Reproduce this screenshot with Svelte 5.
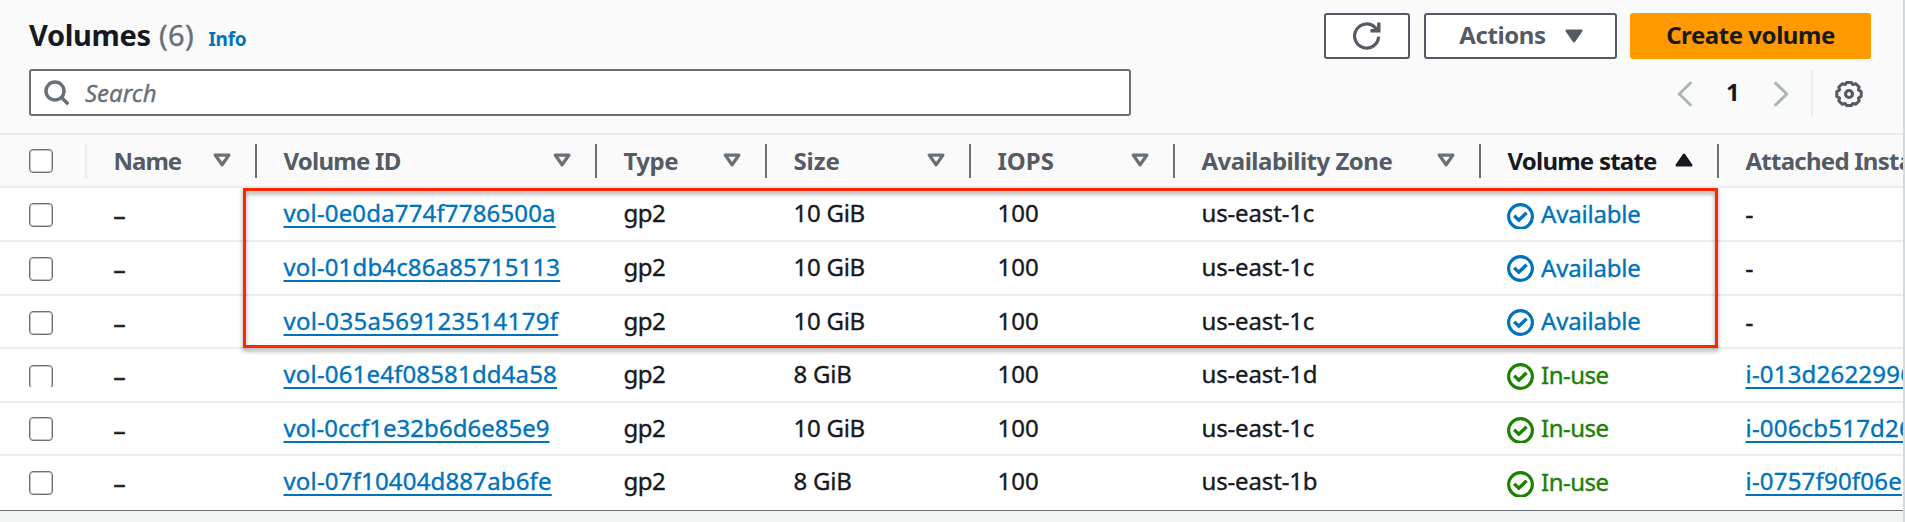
<script>
  const columns = [
    { label: 'Name', track: -1 },
    { label: 'Volume ID', track: -0.75 },
    { label: 'Type', track: -0.5 },
    { label: 'Size', track: -0.1 },
    { label: 'IOPS', track: 0 },
    { label: 'Availability Zone', track: -0.5 },
    { label: 'Volume state', track: -0.78, sorted: true },
    { label: 'Attached Insta', track: -0.75 }
  ];

  const volumes = [
    { id: 'vol-0e0da774f7786500a', track: 0.16, size: '10 GiB', zone: 'us-east-1c', state: 'Available', instance: '-', h: 54, box: 15, icon: 15, iconH: 26, drop: 1 },
    { id: 'vol-01db4c86a85715113', track: 0.15, size: '10 GiB', zone: 'us-east-1c', state: 'Available', instance: '-', h: 54, box: 15, icon: 13, iconH: 27, drop: 1 },
    { id: 'vol-035a569123514179f', track: 0.31, size: '10 GiB', zone: 'us-east-1c', state: 'Available', instance: '-', h: 53, box: 15, icon: 13, iconH: 27, drop: 0 },
    { id: 'vol-061e4f08581dd4a58', track: 0.16, size: '8 GiB', zone: 'us-east-1d', state: 'In-use', instance: 'i-013d2622996', h: 54, box: 16, icon: 14, iconH: 27, drop: 1, cut: true },
    { id: 'vol-0ccf1e32b6d6e85e9', track: 0.02, size: '10 GiB', zone: 'us-east-1c', state: 'In-use', instance: 'i-006cb517d26', h: 53, box: 14, icon: 14, iconH: 26, drop: 0 },
    { id: 'vol-07f10404d887ab6fe', track: 0.17, size: '8 GiB', zone: 'us-east-1b', state: 'In-use', instance: 'i-0757f90f06e', h: 54, box: 15, icon: 15, iconH: 26, drop: 1 }
  ];
</script>

<div class="page">
  <section class="panel">
    <div class="toolbar">
      <div class="heading">
        <h1>Volumes</h1>
        <span class="count">(6)</span>
        <a class="info" href="#info">Info</a>
      </div>
      <div class="actions">
        <button class="btn refresh" aria-label="Refresh">
          <svg width="28" height="28" viewBox="0 0 28 28" fill="none" stroke="#545b64" stroke-width="3.2">
            <path d="M25.6 14.6A12 12 0 1 1 22.2 5.6L24 8" />
            <path d="M25.8 0.4V8.7H17.4" stroke-width="3.4" />
          </svg>
        </button>
        <button class="btn menu">
          <span>Actions</span>
          <svg width="18" height="14" viewBox="0 0 18 14"><path d="M1.7 1.7H16.3L9 12.3Z" fill="#545b64" stroke="#545b64" stroke-width="2.4" stroke-linejoin="round" /></svg>
        </button>
        <button class="btn primary">Create volume</button>
      </div>
    </div>

    <div class="filters">
      <div class="search">
        <svg width="26" height="26" viewBox="0 0 26 26" fill="none" stroke="#687078" stroke-width="3.5">
          <circle cx="11" cy="11" r="9" /><path d="M17.3 17.3L24.2 24.2" />
        </svg>
        <span>Search</span>
      </div>
      <div class="pager">
        <svg width="16" height="26" viewBox="0 0 16 26" fill="none" stroke="#aab7b8" stroke-width="3"><path d="M14.3 1.2L2.3 13L14.3 24.8" /></svg>
        <b>1</b>
        <svg width="16" height="26" viewBox="0 0 16 26" fill="none" stroke="#aab7b8" stroke-width="3"><path d="M1.7 1.2L13.7 13L1.7 24.8" /></svg>
        <div class="gear">
          <svg width="28" height="28" viewBox="-14 -14 28 28" fill="none" stroke="#545b64" stroke-width="3" stroke-linejoin="round">
            <path d="M-2.4 -11.6H2.4L3.8 -9.4L6.8 -10.2L10.2 -7L9.4 -4L12.2 -2.4V2.4L9.4 4L10.2 7L6.8 10.2L3.8 9.4L2.4 11.6H-2.4L-3.8 9.4L-6.8 10.2L-10.2 7L-9.4 4L-12.2 2.4V-2.4L-9.4 -4L-10.2 -7L-6.8 -10.2L-3.8 -9.4Z" />
            <circle r="3.5" stroke-width="3.2" />
          </svg>
        </div>
      </div>
    </div>

    <div class="grid head">
      <div class="cell select"><span class="box"></span></div>
      {#each columns as col, i}
        <div class="cell" class:sorted={col.sorted} class:last={i === columns.length - 1}>
          <span class="label" style="letter-spacing: {col.track}px">{col.label}</span>
          {#if col.sorted}
            <svg width="18" height="14" viewBox="0 0 18 14"><path d="M1.7 12.3H16.3L9 1.7Z" fill="#16191f" stroke="#16191f" stroke-width="2.4" stroke-linejoin="round" /></svg>
          {:else if i < columns.length - 1}
            <svg width="18" height="14" viewBox="0 0 18 14"><path d="M2.3 2.1H15.9L9.1 11.8Z" fill="none" stroke="#687078" stroke-width="3.3" stroke-linejoin="round" /></svg>
          {/if}
        </div>
      {/each}
    </div>

    <div class="rows">
      {#each volumes as v}
        <div class="grid row" style="height: {v.h}px">
          <div class="cell select"><span class="box" class:cut={v.cut} style="margin-top: {v.box}px"></span></div>
          <div class="cell dash">–</div>
          <div class="cell"><a href="#{v.id}" style="letter-spacing: {v.track}px">{v.id}</a></div>
          <div class="cell type">gp2</div>
          <div class="cell size">{v.size}</div>
          <div class="cell iops">100</div>
          <div class="cell zone">{v.zone}</div>
          <div class="cell state" class:used={v.state === 'In-use'}>
            <svg style="margin-top: {v.icon}px" width="27" height={v.iconH} viewBox="0 0 27 {v.iconH}" fill="none" stroke="currentColor" stroke-width="3.1">
              <circle cx="13.5" cy="13.5" r="11.9" /><path d="M7.2 12.8L11.8 17.2L19.6 9.8" stroke-width="3.4" />
            </svg>
            <span style="margin-top: {10 + v.drop}px">{v.state}</span>
          </div>
          <div class="cell instance" class:none={v.instance === '-'}>
            {#if v.instance === '-'}<span>-</span>{:else}<a href="#{v.instance}">{v.instance}</a>{/if}
          </div>
        </div>
      {/each}
      <div class="highlight"></div>
    </div>
  </section>
  <div class="edge"></div>
</div>

<style>
  :global(body) { margin: 0; background: #f2f3f3; }
  .page {
    display: flex;
    width: 1905px;
    height: 522px;
    overflow: hidden;
    box-sizing: border-box;
    font: 24px/30px "Noto Sans", "Open Sans", sans-serif;
    color: #16191f;
    background: #f2f3f3;
  }
  .page * { box-sizing: border-box; }
  .panel { width: 1903px; height: 511px; overflow: hidden; background: #fafafa; border-bottom: 1px solid #687078; }
  .edge { width: 2px; height: 522px; background: #d5dbdb; }
  a { color: #0073bb; text-decoration: none; }

  .toolbar { display: flex; justify-content: space-between; height: 69px; padding: 13px 32px 0 29px; }
  .heading { display: flex; align-items: baseline; padding-top: 4px; }
  h1 { margin: 0; font-size: 29px; line-height: 36px; letter-spacing: -0.35px; }
  .count { margin-left: 8.5px; font-size: 29px; color: #687078; letter-spacing: 0.3px; -webkit-text-stroke: 0.35px; }
  .info { margin-left: 14.5px; font-size: 19px; font-weight: 700; letter-spacing: -0.3px; }
  .actions { display: flex; }
  .btn {
    display: flex;
    align-items: center;
    justify-content: center;
    height: 46px;
    padding: 0;
    border: 2px solid #545b64;
    border-radius: 3px;
    background: #fff;
    color: #545b64;
    font: 700 24px/30px "Noto Sans", "Open Sans", sans-serif;
  }
  .refresh { width: 86px; margin-right: 14px; }
  .menu { width: 193px; margin-right: 13px; gap: 19px; padding-left: 1px; letter-spacing: -0.4px; }
  .menu span { margin-top: -2px; }
  .primary { width: 241px; border: 0; background: #ff9900; color: #16191f; letter-spacing: -0.45px; padding-bottom: 2px; }

  .filters { display: flex; justify-content: space-between; height: 64px; padding: 0 32px 0 29px; }
  .search {
    display: flex;
    align-items: center;
    width: 1102px;
    height: 47px;
    padding: 0 13px;
    gap: 15px;
    border: 2px solid #687078;
    border-radius: 3px;
    background: #fff;
    color: #687078;
    font-style: italic;
    -webkit-text-stroke: 0.35px;
  }
  .pager { display: flex; align-items: center; height: 47px; }
  .pager svg { margin-top: 2px; }
  .pager b { width: 14px; margin: -2px 33px 0 33px; }
  .gear { display: flex; align-items: center; width: 60px; height: 46px; margin-left: 22px; padding-left: 22px; border-left: 2px solid #eaeded; }

  .grid { display: grid; grid-template-columns: 87px 170px 340px 170px 204px 204px 306px 238px 184px; }
  .cell { min-width: 0; padding-left: 26.5px; white-space: nowrap; }
  .select { padding-left: 29px; }
  .box {
    display: block;
    width: 24px;
    height: 24px;
    border: 1px solid #687078;
    border-radius: 4px;
    background: #fff;
    box-shadow: inset 0 0 0 1px rgba(104, 112, 120, 0.4);
  }
  .cut { clip-path: inset(0 0 2px 0); }
  .head { height: 55px; border-top: 2px solid #eaeded; border-bottom: 2px solid #eaeded; font-weight: 700; color: #545b64; }
  .head .cell {
    display: flex;
    justify-content: space-between;
    height: 34px;
    margin-top: 9px;
    padding-right: 24px;
    border-right: 2px solid #687078;
  }
  .head .select { border-right-color: #eaeded; }
  .head .last { padding-right: 0; border-right: 0; }
  .head .box { margin-top: 5px; }
  .head .label { margin-top: 2px; }
  .head svg { flex: none; margin-top: 9px; }
  .head .sorted { color: #16191f; }

  .rows { position: relative; background: #fff; -webkit-text-stroke: 0.35px; }
  .row { border-bottom: 2px solid #eaeded; }
  .row:nth-child(6) { border-bottom: 0; }
  .row .cell { padding-top: 10px; }
  .row .select { padding-top: 0; }
  .row .dash { padding-top: 12px; -webkit-text-stroke: 0.7px; }
  .row .none { padding-top: 11px; -webkit-text-stroke: 0.7px; }
  .row a { text-decoration: underline; text-decoration-thickness: 1.5px; text-underline-offset: 3.5px; text-decoration-skip-ink: none; }
  .type { letter-spacing: -0.5px; }
  .size { letter-spacing: -0.25px; }
  .zone { letter-spacing: -0.15px; }
  .instance { letter-spacing: 0.2px; }
  .row .state { display: flex; gap: 7px; padding: 0 0 0 26px; color: #0073bb; letter-spacing: -0.2px; }
  .row .used { color: #1d8102; letter-spacing: -0.5px; }
  .highlight {
    position: absolute;
    left: 243px;
    top: 0;
    width: 1475px;
    height: 160px;
    border: 3px solid #ff2600;
    filter: drop-shadow(0 3px 2px rgba(0, 0, 0, 0.4));
  }
</style>
